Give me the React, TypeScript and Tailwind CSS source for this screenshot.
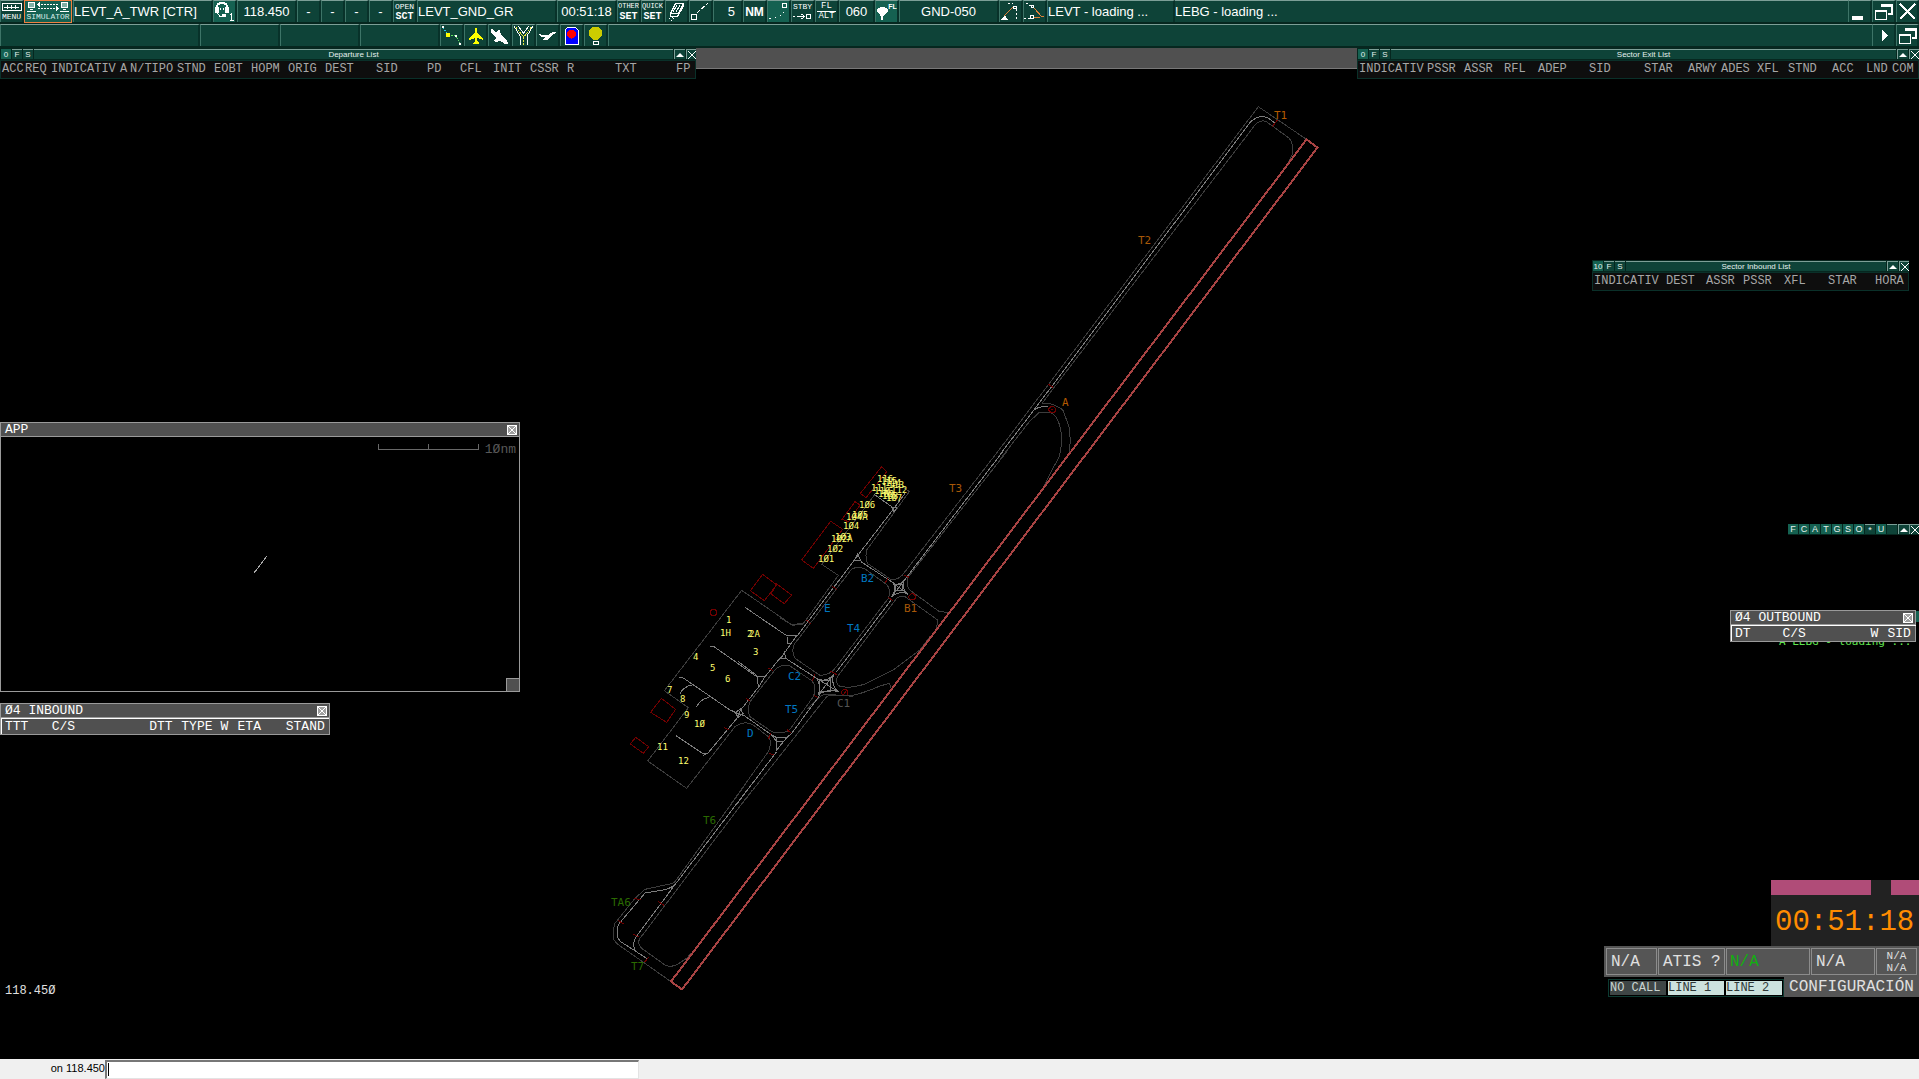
import type { ReactNode } from "react";
import clsx from "clsx";

type Column = [label: string, width: string];

const MONO = "font-['Liberation_Mono',monospace]";

/* ---------- Toolbar ---------- */

type CellProps = {
  className?: string;
  active?: boolean;
  label?: string;
  children?: ReactNode;
};

const cellBase =
  "flex h-full shrink-0 items-center overflow-hidden whitespace-nowrap border-t border-l border-r-2 border-t-[#7c9f97] border-l-[#3d7467] border-r-[#08322a]";

function Cell({ className, children }: CellProps) {
  return <div className={clsx(cellBase, "bg-[#0e4338]", className)}>{children}</div>;
}

function Tool({ className, active, label, children }: CellProps) {
  return (
    <button
      type="button"
      aria-label={label}
      className={clsx(cellBase, "justify-center", active ? "bg-[#156151]" : "bg-[#0e4338]", className ?? "w-6")}
    >
      {children}
    </button>
  );
}

function TwoLines({ top, bottom }: { top: string; bottom: string }) {
  return (
    <span className={clsx("flex flex-col items-center", MONO)}>
      <span className={clsx("leading-[9px]", top.length > 4 ? "text-[7px]" : "text-[8px]")}>{top}</span>
      <span className="text-[10px] leading-[11px] font-bold">{bottom}</span>
    </span>
  );
}

function Icon({ children, w = 21 }: { children: ReactNode; w?: number }) {
  return (
    <svg width={w} height="21" viewBox={`0 0 ${w} 21`} fill="none" stroke="#fff" shapeRendering="crispEdges" className="shrink-0">
      {children}
    </svg>
  );
}

function RestoreIcon() {
  return (
    <Icon>
      <path d="M8 4h11v9h-4M8 5h11" strokeWidth="2" />
      <path d="M2.500 9.500h11v9h-11zM2 10.500h12" />
    </Icon>
  );
}

function MainToolbar() {
  return (
    <header className="flex h-6 border-b-2 border-[#06271f] bg-[#0e4338] text-[13px] leading-5 text-white">
      <Tool className="w-6 flex-col">
        <svg width="20" height="10" viewBox="0 0 20 10" fill="none" stroke="#fff" shapeRendering="crispEdges">
          <rect x="0.500" y="1.500" width="19" height="7" />
          <path d="M2 5h16" strokeDasharray="3 1" />
          <path d="M5.500 3v4M9.500 3v4M13.500 3v4" />
        </svg>
        <span className={clsx("text-[8px] leading-[9px]", MONO)}>MENU</span>
      </Tool>
      <button type="button" className="flex h-[23px] w-12 shrink-0 flex-col items-center border border-[#f08040] bg-[#156151]">
        <svg width="44" height="11" viewBox="0 0 44 11" fill="none" stroke="#fff" shapeRendering="crispEdges" className="shrink-0">
          <path d="M2.500 1.500h6v5h-6zM35.500 1.500h6v5h-6z" fill="#7fb0a6" />
          <path d="M4 8.500h3M1 10h9M37 8.500h3M34 10h9" />
          <path d="M12 3.500h20M12 7.500h20" strokeDasharray="2 1" />
          <path d="M14 1.500l-2 2l2 2M30 5.500l2 2l-2 2" />
        </svg>
        <span className={clsx("text-[8px] leading-[10px] text-[#d5ebe6]", MONO)}>SIMULATOR</span>
      </button>
      <Cell className="ml-px w-[140px]">LEVT_A_TWR [CTR]</Cell>
      <Tool active label="Voice">
        <Icon>
          <path d="M3 9v-3q0-4 5-4t5 4v3" strokeWidth="2" />
          <path d="M1 6h4v6h-4zM11 6h4v6h-4z" fill="#fff" stroke="none" />
          <path d="M3.500 12l2 3h4" />
          <path d="M8 13h4v3h-4zM6 7h1v2h-1zM9 7h1v2h-1z" fill="#fff" stroke="none" />
          <path d="M17.500 12v7M16 13.500h2M16 19.500h4" />
        </Icon>
      </Tool>
      <Cell className="w-[60px] justify-center">118.450</Cell>
      <Tool>-</Tool>
      <Tool>-</Tool>
      <Tool>-</Tool>
      <Tool>-</Tool>
      <Tool><TwoLines top="OPEN" bottom="SCT" /></Tool>
      <Cell className="w-[140px]">LEVT_GND_GR</Cell>
      <Cell className="w-[60px] justify-center">00:51:18</Cell>
      <Tool><TwoLines top="OTHER" bottom="SET" /></Tool>
      <Tool><TwoLines top="QUICK" bottom="SET" /></Tool>
      <Tool label="Clean">
        <Icon>
          <path d="M9.500 2.500h8l-5 10h-8zM11 4l-4 7M14 4l-4 7M4.500 12.500v3h7l6-10v-3" />
          <path d="M3 17l2 1M6 16l2 2M5 19l2 0" strokeDasharray="1 1" />
        </Icon>
      </Tool>
      <Tool label="Separation">
        <Icon>
          <path d="M1.500 13.500h5v5h-5z" />
          <path d="M7 12l11-10" strokeDasharray="4 2" />
        </Icon>
      </Tool>
      <Cell className="w-[30px] justify-end pr-1.5">5</Cell>
      <Tool><b className="text-[12px]">NM</b></Tool>
      <Tool active label="Trail dots">
        <Icon>
          <path d="M14.500 2.500h4v4h-4z" />
          <path d="M15 11h1M12 14h1M7 16h1M1 17h2" />
        </Icon>
      </Tool>
      <Tool>
        <span className={clsx("flex flex-col items-center text-[8px] leading-[10px]", MONO)}>
          <span>STBY</span>
          <svg width="19" height="9" viewBox="0 0 19 9" fill="none" stroke="#fff" shapeRendering="crispEdges">
            <path d="M0 4.500h2M4 4.500h7M8.500 2l3 2.500l-3 2.500M13.500 2.500h4v4h-4z" />
          </svg>
        </span>
      </Tool>
      <Tool>
        <span className={clsx("flex flex-col items-center text-[9px] leading-[9px]", MONO)}>
          <span className="border-b border-white px-1">FL</span>
          <span>ALT</span>
        </span>
      </Tool>
      <Cell className="w-9 justify-center">060</Cell>
      <Tool active>
        <span className="flex items-start">
          <svg width="12" height="19" viewBox="0 0 13 19" fill="#fff" shapeRendering="crispEdges">
            <path d="M1 7h12v2l-5 5v5h-3v-5l-4-5z" />
            <ellipse cx="7" cy="7" rx="5" ry="2" />
          </svg>
          <span className="text-[7px] leading-[9px] font-bold">FL</span>
        </span>
      </Tool>
      <Cell className="w-[100px] justify-center">GND-050</Cell>
      <Tool label="Range left">
        <Icon>
          <path d="M4 15l9-9" stroke="#e08038" />
          <path d="M1 19h7l-3-5z" fill="#fff" stroke="none" />
          <path d="M13.500 5.500h3v2h-3z" />
          <path d="M16 8v11M8 2h5" strokeDasharray="2 2" />
        </Icon>
      </Tool>
      <Tool label="Range right">
        <Icon>
          <path d="M10 7l8 9M10 16h6M17 15h3" stroke="#e08038" />
          <path d="M7.500 4.500h2v2h-2zM6.500 14.500h3v3h-3z" />
          <path d="M2 2l5 3M0 17h6" strokeDasharray="2 2" />
        </Icon>
      </Tool>
      <Cell className="w-32 border-r-[#0e4338]">LEVT - loading ...</Cell>
      <div className="flex h-full flex-1 items-center border-t border-[#7c9f97]">LEBG - loading ...</div>
      <Tool label="Minimize">
        <Icon><path d="M3 17h11" strokeWidth="4" /></Icon>
      </Tool>
      <Tool label="Restore"><RestoreIcon /></Tool>
      <Tool label="Close" className="w-[23px]">
        <Icon><path d="M3 3l15 15M18 3l-15 15" strokeWidth="2" /></Icon>
      </Tool>
    </header>
  );
}

function SecondToolbar() {
  return (
    <nav className="flex h-6 border-b-2 border-[#06271f] bg-[#0e4338]">
      <Cell className="w-[200px]" />
      <Cell className="w-20" />
      <Cell className="w-20" />
      <Cell className="w-20" />
      <Tool label="Route">
        <Icon>
          <path d="M2 2l4 7" stroke="#20c8e8" strokeDasharray="2 1" />
          <path d="M7 10h6l3 3l3 6" stroke="#60e060" strokeDasharray="2 1" />
          <path d="M5 8h4v4h-4z" fill="#ffff00" stroke="none" />
          <path d="M1 1h2v2h-2zM14 10h2v2h-2zM18 18h2v2h-2z" fill="#fff" stroke="none" />
        </Icon>
      </Tool>
      <Tool label="Aircraft">
        <Icon><path d="M10 3h2v5l6 5v2l-6-2v3l2 2v1h-6v-1l2-2v-3l-6 2v-2l6-5z" fill="#ffff00" stroke="none" /></Icon>
      </Tool>
      <Tool label="Landing">
        <Icon><path d="M2 4h2l2 3l2 0l1-2h2l1 5l4 4l2 1l1 4l-3 0l-3-2l-2-1l-4 1l-2-1l2-3l-3-3l-2-3z" fill="#fff" stroke="none" /></Icon>
      </Tool>
      <Tool label="Taxiways">
        <Icon>
          <path d="M1 1l6 10v9M20 1l-6 10v9M5 1l5.500 7l5.500-7" />
          <path d="M3 2l7.500 10v8M18 2l-7 10" stroke="#e8e840" strokeDasharray="2 1" />
        </Icon>
      </Tool>
      <Tool label="Departure">
        <Icon><path d="M1 9h2l2 1h6l5-3h3v1l-5 3l-4 4h-4l2-3h-4z" fill="#fff" stroke="none" /></Icon>
      </Tool>
      <Tool label="Stop bar">
        <Icon>
          <path d="M4 19v-14l3-3h7l3 3v14z" fill="#0000ff" />
          <circle cx="10.500" cy="9" r="4.500" fill="#ff0000" stroke="none" />
        </Icon>
      </Tool>
      <Tool label="Lights">
        <Icon>
          <path d="M4 6l3-4h7l3 4v4l-4 5h-5l-4-5z" fill="#cccc00" stroke="none" />
          <path d="M8 16.500h5v3h-5z" />
        </Icon>
      </Tool>
      <div className="flex-1 border-t border-l border-t-[#7c9f97] border-l-[#3d7467]" />
      <Tool label="Next">
        <Icon><path d="M9 4l6 6.500l-6 6.500z" fill="#fff" stroke="none" /></Icon>
      </Tool>
      <Tool label="Restore view" className="w-[23px]"><RestoreIcon /></Tool>
    </nav>
  );
}

/* ---------- Green traffic lists ---------- */

function MiniArrow() {
  return (
    <button type="button" aria-label="Collapse" className="flex h-[10px] w-[11px] items-center justify-center border-t border-l border-[#7c9f97] bg-[#0e4338]">
      <svg width="8" height="8" viewBox="0 0 8 8" fill="#fff"><path d="M0 6l4-4l4 4z" /></svg>
    </button>
  );
}

function MiniClose() {
  return (
    <button type="button" aria-label="Close" className="flex h-[10px] w-[10px] items-center justify-center border-t border-l border-[#7c9f97] bg-[#0e4338]">
      <svg width="8" height="8" viewBox="0 0 8 8" stroke="#fff"><path d="M0 0l8 8M8 0l-8 8" /></svg>
    </button>
  );
}

type TrafficListProps = {
  title: string;
  count: string;
  columns: Column[];
  className: string;
};

function TrafficList({ title, count, columns, className }: TrafficListProps) {
  return (
    <section className={clsx("absolute", className)}>
      <div className="flex h-3 items-start gap-px bg-[#06271f] pt-px pl-px text-[8px] leading-[9px] text-[#e4f0ed]">
        <button type="button" className="h-[10px] w-[10px] bg-[#156151]">{count}</button>
        <button type="button" className="h-[10px] w-[10px] border-t border-[#7c9f97] bg-[#0e4338]">F</button>
        <button type="button" className="h-[10px] w-[10px] border-t border-[#7c9f97] bg-[#0e4338]">S</button>
        <h2 className="h-[10px] flex-1 border-t border-[#7c9f97] bg-[#0e4338] text-center">{title}</h2>
        <MiniArrow />
        <MiniClose />
      </div>
      <div className="h-[19px] border border-[#0a3029] bg-[#0e0e0e] pl-px">
        <table className={clsx("table-fixed border-collapse text-[12px] leading-4 text-[#a6a6a6]", MONO)}>
          <thead>
            <tr>
              {columns.map(([label, width]) => (
                <th key={label} scope="col" className={clsx("p-0 text-left font-normal whitespace-nowrap", width)}>
                  <div className={width}>{label}</div>
                </th>
              ))}
            </tr>
          </thead>
        </table>
      </div>
    </section>
  );
}

const departureColumns: Column[] = [
  ["ACC", "w-[23px]"], ["REQ", "w-[26px]"], ["INDICATIV", "w-[69px]"], ["A", "w-[10px]"],
  ["N/TIPO", "w-[47px]"], ["STND", "w-[37px]"], ["EOBT", "w-[37px]"], ["HOPM", "w-[37px]"],
  ["ORIG", "w-[37px]"], ["DEST", "w-[51px]"], ["SID", "w-[51px]"], ["PD", "w-[33px]"],
  ["CFL", "w-[33px]"], ["INIT", "w-[37px]"], ["CSSR", "w-[37px]"], ["R", "w-[48px]"],
  ["TXT", "w-[61px]"], ["FP", "w-[16px]"],
];

const exitColumns: Column[] = [
  ["INDICATIV", "w-[68px]"], ["PSSR", "w-[37px]"], ["ASSR", "w-[40px]"], ["RFL", "w-[34px]"],
  ["ADEP", "w-[51px]"], ["SID", "w-[55px]"], ["STAR", "w-[44px]"], ["ARWY", "w-[33px]"],
  ["ADES", "w-[36px]"], ["XFL", "w-[31px]"], ["STND", "w-[44px]"], ["ACC", "w-[34px]"],
  ["LND", "w-[26px]"], ["COM", "w-[24px]"],
];

const inboundColumns: Column[] = [
  ["INDICATIV", "w-[72px]"], ["DEST", "w-[40px]"], ["ASSR", "w-[37px]"], ["PSSR", "w-[41px]"],
  ["XFL", "w-[44px]"], ["STAR", "w-[47px]"], ["HORA", "w-[30px]"],
];

function FilterStrip() {
  return (
    <div className="absolute top-[476px] right-0 flex h-[11px] bg-[#06271f] text-[9px] leading-[10px] text-[#e4f0ed]">
      {["F", "C", "A", "T", "G", "S", "O", "*", "U", ""].map((key, i) => (
        <button
          key={i}
          type="button"
          aria-label={key || "Filter"}
          className={clsx(
            "mr-px h-[10px] w-[10px]",
            key === "*" || key === "" ? "border-t border-[#7c9f97] bg-[#0e4338]" : "bg-[#156151]",
          )}
        >
          {key}
        </button>
      ))}
      <MiniArrow />
      <MiniClose />
    </div>
  );
}

/* ---------- Grey windows ---------- */

function CloseBox() {
  return (
    <button type="button" aria-label="Close" className="flex size-[10px] items-center justify-center border border-white bg-[#a0a0a0]">
      <svg width="8" height="8" viewBox="0 0 8 8" stroke="#fff"><path d="M0 0l8 8M8 0l-8 8" /></svg>
    </button>
  );
}

type GreyListProps = {
  title: string;
  columns: Column[];
  className: string;
};

function GreyList({ title, columns, className }: GreyListProps) {
  return (
    <section className={clsx("absolute border border-[#9a9a9a] bg-[#505050] text-[13px] text-white", MONO, className)}>
      <div className="flex h-[14px] items-center justify-between border-b border-[#9a9a9a] pr-0.5 pl-1 leading-[15px]">
        <h2>{title}</h2>
        <CloseBox />
      </div>
      <table className="w-full table-fixed border-collapse border-t border-l border-white leading-[15px]">
        <thead>
          <tr>
            {columns.map(([label, width]) => (
              <th key={label} scope="col" className={clsx("p-0 pl-[3px] text-left font-normal whitespace-nowrap", width)}>{label}</th>
            ))}
          </tr>
        </thead>
      </table>
    </section>
  );
}

function AppWindow() {
  return (
    <section className={clsx("absolute top-[374px] left-0 flex h-[270px] w-[520px] flex-col border border-[#9a9a9a] bg-black text-[13px]", MONO)}>
      <div className="flex h-[14px] items-center justify-between border-b border-[#9a9a9a] bg-[#505050] pr-0.5 pl-1 leading-[15px] text-white">
        <h2>APP</h2>
        <CloseBox />
      </div>
      <div className="relative flex-1">
        <svg className="absolute inset-0 size-full" fill="none" shapeRendering="crispEdges">
          <path d="M377.500 7v5.500h100v-5.500M427.500 7v5" stroke="#686868" />
          <path d="M253 136l13-17" stroke="#a8a8a8" />
        </svg>
        <span className="absolute top-[5px] right-[3px] leading-4 text-[#585858]">1Ønm</span>
        <div className="absolute right-0 bottom-0 size-[13px] border-t border-l border-[#9a9a9a] bg-[#505050]" />
      </div>
    </section>
  );
}

/* ---------- Airport ground map ---------- */

type Sheet = {
  origin: string;
  edges: string[];
  centres: string[];
  marks: string[];
};

// Every sheet is digitised at three units per pixel
const sheets: Sheet[] = [
  {
    origin: "translate(1000 90) scale(0.33333)",
    edges: [
      "M0 1076L775 50L918 147",
      "M126 940L765 105Q785 85 802 97L868 145Q882 165 876 195L862 222",
      "M126 940L150 941Q180 950 190 963L207 1010L211 1050L208 1085",
      "M0 1108L88 995L118 967L150 967Q172 975 180 1010Q190 1050 178 1100L156 1140L132 1190",
    ],
    centres: ["M0 1093L102 960L752 95Q785 68 810 88L826 100", "M102 960Q115 949 143 949"],
    marks: ["M832 90L817 110", "M145 883L160 893", "M153 950h8l6 6v6l-6 6h-8l-6-6v-6z", "M154 959h6"],
  },
  {
    origin: "translate(780 450) scale(0.33333)",
    edges: [
      "M660 -4L375 365Q358 392 332 388L262 340Q255 318 260 300L388 125L368 110",
      "M684 0L383 383L383 408Q386 420 400 428L478 485L508 487",
      "M470 533L473 510L375 440Q362 435 350 445L172 680Q165 700 178 708Q210 718 260 700L340 660L420 600L450 560",
      "M335 718L328 700L300 708Q230 738 200 738L135 732Q112 742 82 778",
      "M285 133L125 343L175 376L78 510L68 522L38 526L0 503",
      "M215 357Q235 348 255 357L318 402Q335 418 325 445L165 655Q150 675 120 676L45 625Q32 600 45 580Z",
    ],
    centres: [
      "M672 0L372 392",
      "M342 175L232 318L50 560",
      "M282 133L342 175L375 130",
      "M335 172h16l-9 14z",
      "M232 312L222 333H243Z",
      "M243 335L345 402",
      "M335 448L170 665",
      "M340 400L385 433M372 392L335 440",
      "M340 400Q357 408 372 392Q362 415 385 433Q360 420 335 440Q352 415 340 400Z",
      "M346 405h22v18h-22z",
    ],
    marks: [
      "M305 50L320 65L258 143L241 130Z",
      "M225 155L240 165L205 215L186 208Z",
      "M152 214L188 238L100 355L65 330Z",
      "M155 408L170 418M80 510L92 520M372 375L388 382M325 383L316 398M325 443L340 452",
      "M150 663L172 675M105 673L97 692M100 735L118 745",
      "M393 432h8l6 6v6l-6 6h-8l-6-6v-6z",
      "M190 718h10l4 5v9l-4 5h-10l-4-5v-9zM190 735l10-15",
    ],
  },
  {
    origin: "translate(620 570) scale(0.33333)",
    edges: [
      "M545 160L515 164L365 61L133 362L205 413L83 573L200 655L345 470Q375 450 400 465L445 500Q458 515 445 545L333 702",
      "M363 705L620 380Q640 370 700 380",
      "M390 395L465 300Q485 280 510 288L575 332Q592 350 580 380L510 478Q490 495 455 485L390 440Q380 420 390 395Z",
    ],
    centres: [
      "M375 112L500 197H530L482 265H497L590 325",
      "M503 200V222H512M492 242L497 265",
      "M482 262L435 320H410L282 230H270",
      "M355 275L412 318M412 322V340L418 348L435 320",
      "M418 348L362 420",
      "M178 322L190 324L330 420L350 428",
      "M180 372Q190 350 215 345M229 410Q245 385 268 382",
      "M345 428L360 418L370 430L355 442ZM345 428L370 436M362 415L354 445",
      "M370 435L455 495L470 503H500L515 490L600 375",
      "M470 503V540L500 503M455 495L470 515H488",
      "M355 440L265 548Q255 555 245 548L168 497M248 557L265 548",
      "M590 325Q615 340 640 315Q632 345 655 365Q620 355 595 375Q605 350 590 325Z",
      "M590 325L655 365M640 315L595 375M598 332h34v32h-34z",
      "M348 705L470 545",
    ],
    marks: [
      "M428 13L470 45L433 92L391 62Z",
      "M470 42L515 75L493 101L453 72Z",
      "M276 119h9l5 5v7l-5 5h-9l-5-5v-7z",
      "M124 385L167 418L140 457L92 427Z",
      "M47 502L86 530L70 550L31 522Z",
      "M445 295L460 302M378 385L390 393M312 473L328 480M500 478L512 488M452 490L445 508M448 550L462 555",
    ],
  },
  {
    origin: "translate(600 790) scale(0.33333)",
    edges: [
      "M430 -8L225 275Q215 283 195 285L135 298L105 325L45 400Q38 415 42 450L52 462L213 575",
      "M457 0L120 445Q110 460 125 475L195 525Q215 535 240 518L262 503L272 490",
    ],
    centres: [
      "M443 -2L228 280L110 438Q97 455 103 478L108 485",
      "M228 280Q215 295 190 300L135 309L58 400Q48 415 54 445L62 455L140 505",
    ],
    marks: ["M148 500L133 517M175 335L193 347M100 432L118 442M103 325L122 330M55 392L72 402"],
  },
];

type Label = [text: string, x: number, y: number, color: string];

const taxiLabels: Label[] = [
  ["T1", 1274, 119, "fill-[#b35a00]"], ["T2", 1138, 244, "fill-[#a85808]"], ["A", 1062, 406, "fill-[#b35a00]"],
  ["T3", 949, 492, "fill-[#a85808]"], ["B1", 904, 612, "fill-[#a85808]"], ["B2", 861, 582, "fill-[#0078c0]"],
  ["E", 824, 612, "fill-[#0078c0]"], ["T4", 847, 632, "fill-[#0078c0]"], ["C2", 788, 680, "fill-[#0078c0]"],
  ["C1", 837, 707, "fill-[#555555]"], ["T5", 785, 713, "fill-[#0078c0]"], ["D", 747, 737, "fill-[#0078c0]"],
  ["T6", 703, 824, "fill-[#2a6a00]"], ["TA6", 611, 906, "fill-[#2a6a00]"], ["T7", 631, 970, "fill-[#2a6a00]"],
];

const stands: [string, number, number][] = [
  ["1Ø1", 818, 562], ["1Ø2", 827, 552], ["1Ø2A", 831, 542], ["1Ø3", 835, 540], ["1Ø4", 843, 529],
  ["1Ø4A", 846, 520], ["1Ø5", 852, 518], ["1Ø6", 859, 508], ["1Ø7", 886, 501], ["1Ø8", 882, 499],
  ["1Ø9", 878, 497], ["11Ø", 874, 494], ["111", 871, 491], ["112", 891, 493], ["113", 888, 488],
  ["114", 885, 486], ["115", 881, 484], ["116", 877, 482],
  ["1", 726, 623], ["1H", 720, 636], ["2", 747, 637], ["2A", 749, 637], ["3", 753, 655], ["4", 693, 660],
  ["5", 710, 671], ["6", 725, 682], ["7", 667, 693], ["8", 680, 702], ["9", 684, 718], ["1Ø", 694, 727],
  ["11", 657, 750], ["12", 678, 764],
];

function GroundMap() {
  return (
    <svg className="absolute inset-0 size-full" fill="none">
      {/* the two toolbars take the first 48 pixels of the screen */}
      <g transform="translate(0 -48)">
        <g shapeRendering="crispEdges" className="[&_path]:[vector-effect:non-scaling-stroke]">
          {sheets.map((sheet) => (
            <g key={sheet.origin} transform={sheet.origin}>
              {sheet.edges.map((d) => <path key={d} d={d} stroke="#3c3c3c" />)}
              {sheet.centres.map((d) => <path key={d} d={d} stroke="#7c7c7c" />)}
              {sheet.marks.map((d) => <path key={d} d={d} stroke="#700000" />)}
            </g>
          ))}
          <path d="M1306.500 139.500L1317.500 147.500L682 989.500L671 981.500Z" stroke="#a84343" strokeWidth="2" />
        </g>
        <g className="font-['DejaVu_Sans_Mono',monospace] text-[11px]">
          {taxiLabels.map(([text, x, y, color]) => (
            <text key={text} x={x} y={y} className={color}>{text}</text>
          ))}
        </g>
        <g className="fill-[#ffff70] font-['DejaVu_Sans_Mono',monospace] text-[9px]">
          {stands.map(([text, x, y]) => (
            <text key={text} x={x} y={y}>{text}</text>
          ))}
        </g>
      </g>
    </svg>
  );
}

/* ---------- Bottom right ---------- */

function StatusPanel() {
  const box = "flex h-[27px] items-center border border-[#8c8c8c]";
  return (
    <aside className={clsx("absolute right-0 bottom-[62px] flex w-[315px] flex-col items-end text-[#e0e0e0]", MONO)}>
      <div className="h-[66px] w-[148px] bg-[#222222]">
        <div className="flex h-[15px] justify-between">
          <div className="w-[100px] bg-[#b04c78]" />
          <div className="w-7 bg-[#b04c78]" />
        </div>
        <time className="block pt-[11px] pl-1 text-[29px] leading-[34px] text-[#ff8c00]">00:51:18</time>
      </div>
      <div className="flex h-[31px] w-full gap-px bg-[#555555] p-0.5 text-[16px]">
        <button type="button" className={clsx(box, "w-[51px] pl-1")}>N/A</button>
        <button type="button" className={clsx(box, "w-[67px] pl-1")}>ATIS ?</button>
        <button type="button" className={clsx(box, "w-[84px] pl-[3px] text-[#10b010]")}>N/A</button>
        <button type="button" className={clsx(box, "w-[64px] pl-1")}>N/A</button>
        <button type="button" className={clsx(box, "flex-1 flex-col justify-center text-[11px] leading-3")}>
          <span>N/A</span>
          <span>N/A</span>
        </button>
      </div>
      <div className="flex">
        <div className="mt-0.5 flex h-[18px] gap-0.5 border border-[#0c3a31] bg-black p-px text-[12px] leading-[14px]">
          <button type="button" className="h-[14px] w-14 bg-[#3f4646] text-left text-[#c8d4d0]">NO CALL</button>
          <button type="button" className="h-[14px] w-14 bg-[#cce2de] text-left text-[#303838]">LINE 1</button>
          <button type="button" className="h-[14px] w-14 bg-[#cce2de] text-left text-[#303838]">LINE 2</button>
        </div>
        <button type="button" className="h-5 w-[135px] bg-[#555555] text-[16px] leading-5">CONFIGURACIÓN</button>
      </div>
    </aside>
  );
}

/* ---------- Page ---------- */

export default function App() {
  return (
    <div className="flex h-screen flex-col overflow-hidden bg-black font-['Liberation_Sans',Arial,sans-serif]">
      <MainToolbar />
      <SecondToolbar />

      <main className="relative flex-1 overflow-hidden">
        <div className="h-[21px] border-b border-[#787878] bg-[#505050]" />
        <GroundMap />

        <TrafficList title="Departure List" count="0" columns={departureColumns} className="top-0 left-0 w-[696px]" />
        <TrafficList title="Sector Exit List" count="0" columns={exitColumns} className="top-0 right-0 w-[562px]" />
        <TrafficList title="Sector Inbound List" count="10" columns={inboundColumns} className="top-[212px] right-[10px] w-[317px]" />
        <FilterStrip />

        <AppWindow />
        <GreyList
          title="Ø4 INBOUND"
          className="top-[655px] left-0 w-[330px]"
          columns={[
            ["TTT", "w-[47px]"], ["C/S", "w-[97px]"], ["DTT", "w-[32px]"], ["TYPE", "w-[39px]"],
            ["W", "w-[17px]"], ["ETA", "w-[48px]"], ["STAND", "w-[46px]"],
          ]}
        />

        {/* Message list, mostly covered by the outbound window */}
        <div className="absolute top-[563px] right-0 w-[140px] font-['DejaVu_Sans_Mono',monospace] text-[11px] whitespace-nowrap text-[#60e850]">
          <div className="h-[11px] bg-[#156151]" />
          <p className="pt-3 leading-4">A LEBG - loading ...</p>
        </div>
        <GreyList
          title="Ø4 OUTBOUND"
          className="top-[562px] right-[3px] w-[186px]"
          columns={[["DT", "w-[48px]"], ["C/S", "w-[88px]"], ["W", "w-[17px]"], ["SID", "w-[31px]"]]}
        />

        <p className={clsx("absolute bottom-[60px] left-[5px] text-[12px] leading-4 text-[#e0e0e0]", MONO)}>118.45Ø</p>
        <StatusPanel />
      </main>

      <footer className="flex h-5 bg-[#f0f0f0] pt-px text-[11px] text-black">
        <label htmlFor="command" className="w-[105px] text-right leading-4">on 118.450</label>
        <div className="relative w-[534px]">
          <input
            id="command"
            type="text"
            className="block h-[19px] w-full border-t-2 border-r border-b border-l-2 border-t-[#777777] border-r-[#e3e3e3] border-b-[#e3e3e3] border-l-[#777777] bg-white px-1 caret-transparent outline-none"
          />
          <span className="absolute top-[3px] left-[3px] h-[13px] w-px bg-black" />
        </div>
      </footer>
    </div>
  );
}
